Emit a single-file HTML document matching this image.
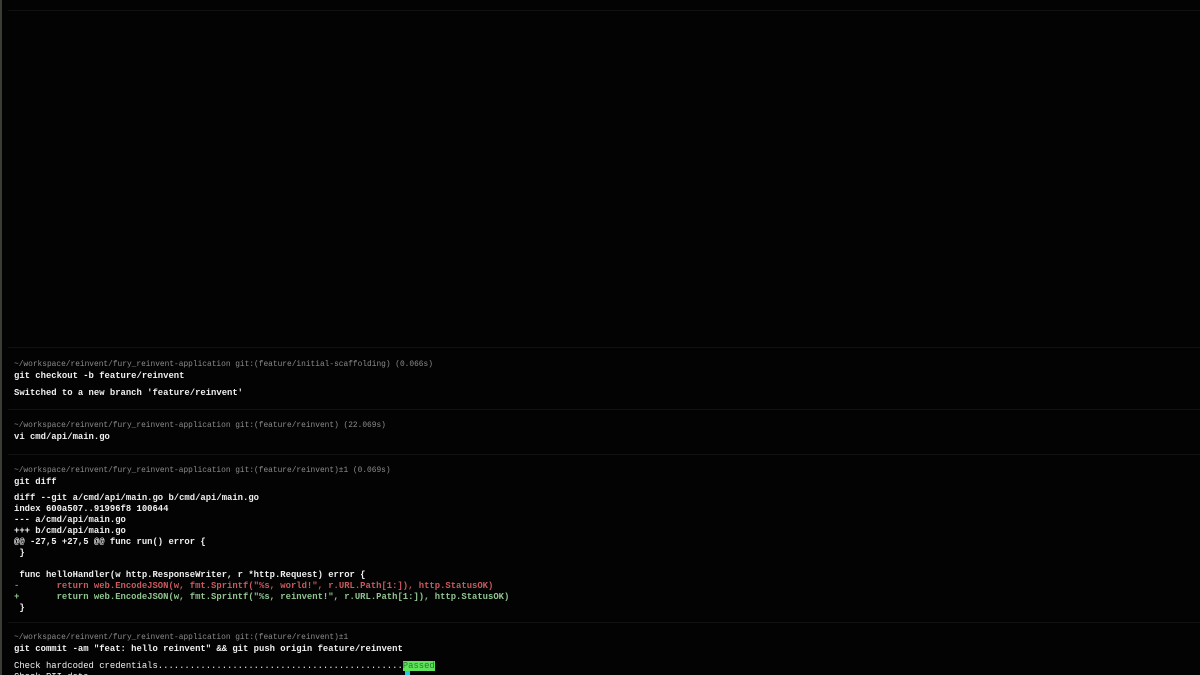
<!DOCTYPE html>
<html><head><meta charset="utf-8"><style>
html,body{margin:0;padding:0;background:#030303;width:1200px;height:675px;overflow:hidden;position:relative}
.l{position:absolute;left:14px;font-family:"Liberation Mono",monospace;font-size:8.9px;font-weight:bold;color:#f0f0f0;white-space:pre;line-height:11px}
.p{color:#8c8c8c;font-weight:normal;font-size:7.85px}
.r{color:#c95a5e}
.g{color:#8fc48f}
.sep{position:absolute;left:8px;right:0;height:1px;background:#111}
.bl{position:absolute;left:0;top:0;width:2px;height:675px;background:#3a3d34}
</style></head><body>
<div class="bl"></div>
<div class="sep" style="top:10px"></div>
<div class="sep" style="top:347px"></div>
<div class="l p" style="top:359px">~/workspace/reinvent/fury_reinvent-application git:(feature/initial-scaffolding) (0.066s)</div>
<div class="l" style="top:371px">git checkout -b feature/reinvent</div>
<div class="l" style="top:388px">Switched to a new branch 'feature/reinvent'</div>
<div class="sep" style="top:409px"></div>
<div class="l p" style="top:420px">~/workspace/reinvent/fury_reinvent-application git:(feature/reinvent) (22.069s)</div>
<div class="l" style="top:432px">vi cmd/api/main.go</div>
<div class="sep" style="top:454px"></div>
<div class="l p" style="top:465px">~/workspace/reinvent/fury_reinvent-application git:(feature/reinvent)±1 (0.069s)</div>
<div class="l" style="top:477px">git diff</div>
<div class="l" style="top:493px">diff --git a/cmd/api/main.go b/cmd/api/main.go
index 600a507..91996f8 100644
--- a/cmd/api/main.go
+++ b/cmd/api/main.go
@@ -27,5 +27,5 @@ func run() error {
 }

 func helloHandler(w http.ResponseWriter, r *http.Request) error {
<span class="r">-       return web.EncodeJSON(w, fmt.Sprintf("%s, world!", r.URL.Path[1:]), http.StatusOK)</span>
<span class="g">+       return web.EncodeJSON(w, fmt.Sprintf("%s, reinvent!", r.URL.Path[1:]), http.StatusOK)</span>
 }</div>
<div class="sep" style="top:622px"></div>
<div class="l p" style="top:632px">~/workspace/reinvent/fury_reinvent-application git:(feature/reinvent)±1</div>
<div class="l" style="top:644px">git commit -am "feat: hello reinvent" &amp;&amp; git push origin feature/reinvent</div>
<div class="l" style="top:661px;font-weight:normal">Check hardcoded credentials..............................................<span style="background:#5ee35a;color:#2a7a2a">Passed</span></div>
<div class="l" style="top:672px;font-weight:normal">Check PII data</div>
<div style="position:absolute;left:405px;top:671px;width:5px;height:4px;background:#2ac8e0"></div>
</body></html>
